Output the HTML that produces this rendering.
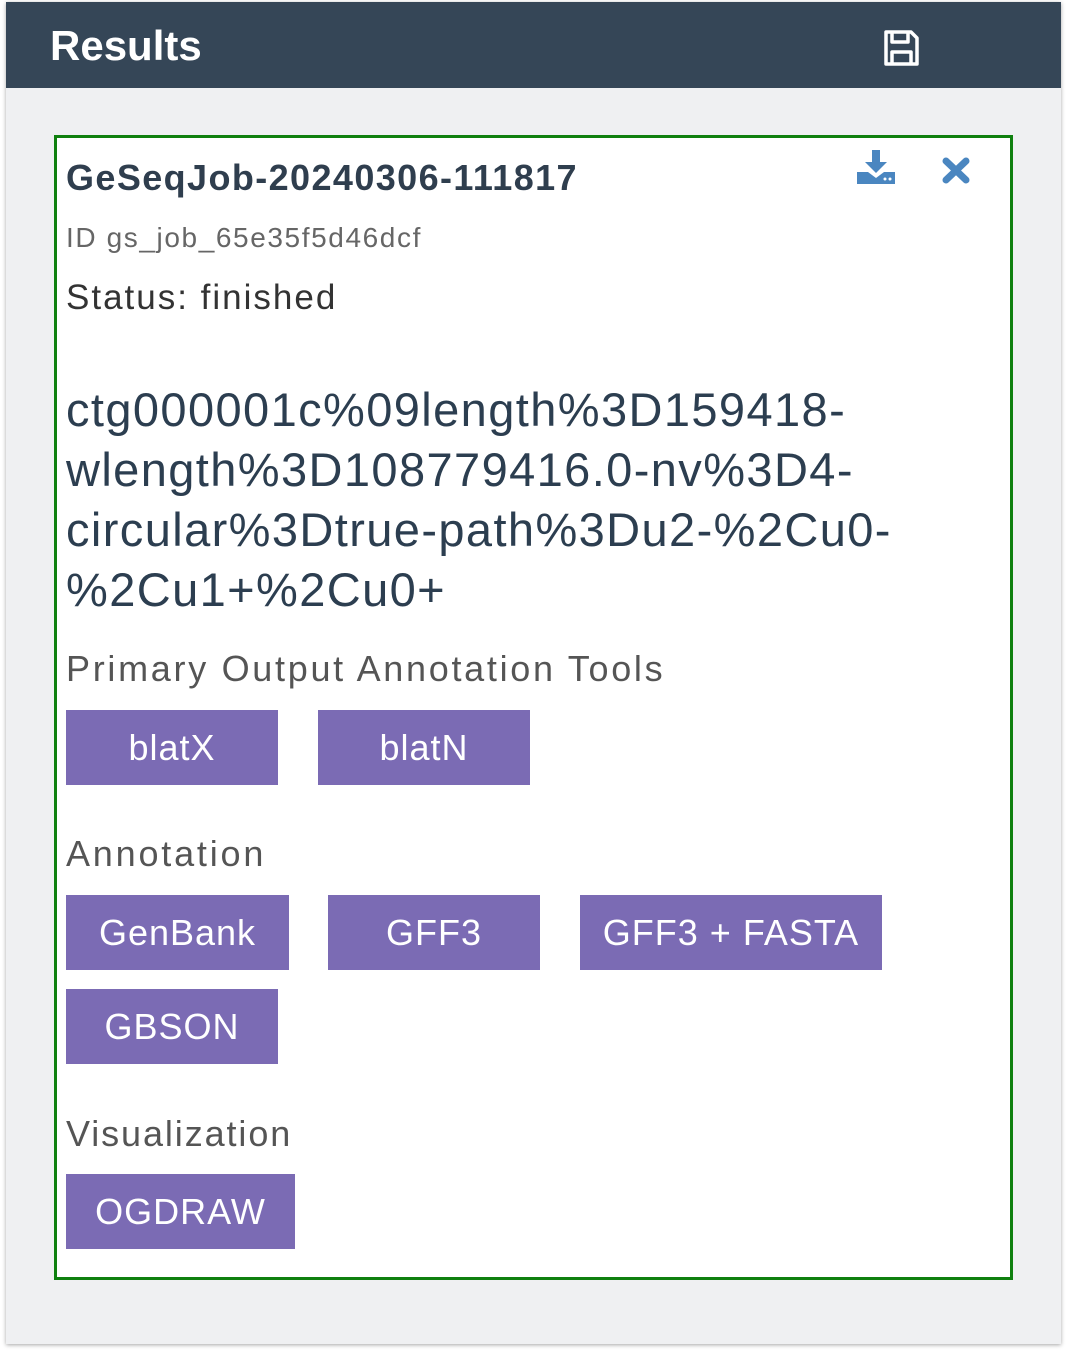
<!DOCTYPE html>
<html><head><meta charset="utf-8"><style>
*{margin:0;padding:0;box-sizing:border-box}
body{width:1070px;height:1350px;background:#fff;font-family:"Liberation Sans",sans-serif;position:relative;overflow:hidden}
.panel{position:absolute;left:6px;top:2px;width:1055px;height:1342px;background:#eff0f2;box-shadow:0 1px 4px rgba(0,0,0,.35)}
.hdr{position:absolute;left:6px;top:2px;width:1055px;height:86px;background:#354657}
.hdr h1{position:absolute;left:44px;top:20px;color:#fff;font-size:42px;font-weight:bold;letter-spacing:0px}
.card{position:absolute;left:54px;top:135px;width:959px;height:1145px;background:#fff;border:3px solid #0f800f}
.t{position:absolute;left:66px;white-space:nowrap;color:#2c3e50}
.btn{position:absolute;background:#7b6bb4;color:#fff;font-size:36px;letter-spacing:1px;display:flex;align-items:center;justify-content:center;height:75px}
</style></head><body>
<div class="panel"></div>
<div class="hdr"><h1>Results</h1>
<svg style="position:absolute;left:877px;top:27px" width="37" height="38" viewBox="0 0 37 38"><path d="M3 3h25l6 6v26H3z M9 3v10h16V3 M9 35V23h19v12" fill="none" stroke="#fff" stroke-width="3.5" stroke-linejoin="round"/></svg>
</div>
<div class="card"></div>
<svg style="position:absolute;left:857px;top:150px" width="38" height="34" viewBox="0 0 38 34"><path d="M15 0h8v12h7l-11 11L8 12h7z" fill="#4a86c0"/><path d="M0 22h11l8 6 8-6h11v12H0z" fill="#4a86c0"/><circle cx="28" cy="29" r="1.5" fill="#fff"/><circle cx="33" cy="29" r="1.5" fill="#fff"/></svg>
<svg style="position:absolute;left:942px;top:157px" width="28" height="27" viewBox="0 0 28 27"><path d="M4 4L24 23M24 4L4 23" stroke="#4a86c0" stroke-width="7" stroke-linecap="round"/></svg>
<div class="t" style="top:157px;font-size:36px;font-weight:bold;color:#2f3e4e;letter-spacing:1.4px">GeSeqJob-20240306-111817</div>
<div class="t" style="top:222px;font-size:28px;color:#666;letter-spacing:1.6px">ID gs_job_65e35f5d46dcf</div>
<div class="t" style="top:278px;font-size:35px;color:#333;letter-spacing:2px">Status: finished</div>
<div class="t" style="top:380px;font-size:47px;line-height:60px;color:#2c3e50;letter-spacing:1.4px">ctg000001c%09length%3D159418-<br>wlength%3D108779416.0-nv%3D4-<br>circular%3Dtrue-path%3Du2-%2Cu0-<br>%2Cu1+%2Cu0+</div>
<div class="t" style="top:648px;font-size:36px;color:#555;letter-spacing:2.7px">Primary Output Annotation Tools</div>
<div class="btn" style="left:66px;top:710px;width:212px">blatX</div>
<div class="btn" style="left:318px;top:710px;width:212px">blatN</div>
<div class="t" style="top:833px;font-size:36px;color:#555;letter-spacing:2.8px">Annotation</div>
<div class="btn" style="left:66px;top:895px;width:223px">GenBank</div>
<div class="btn" style="left:328px;top:895px;width:212px">GFF3</div>
<div class="btn" style="left:580px;top:895px;width:302px">GFF3 + FASTA</div>
<div class="btn" style="left:66px;top:989px;width:212px">GBSON</div>
<div class="t" style="top:1113px;font-size:36px;color:#555;letter-spacing:1.9px">Visualization</div>
<div class="btn" style="left:66px;top:1174px;width:229px">OGDRAW</div>
</body></html>
